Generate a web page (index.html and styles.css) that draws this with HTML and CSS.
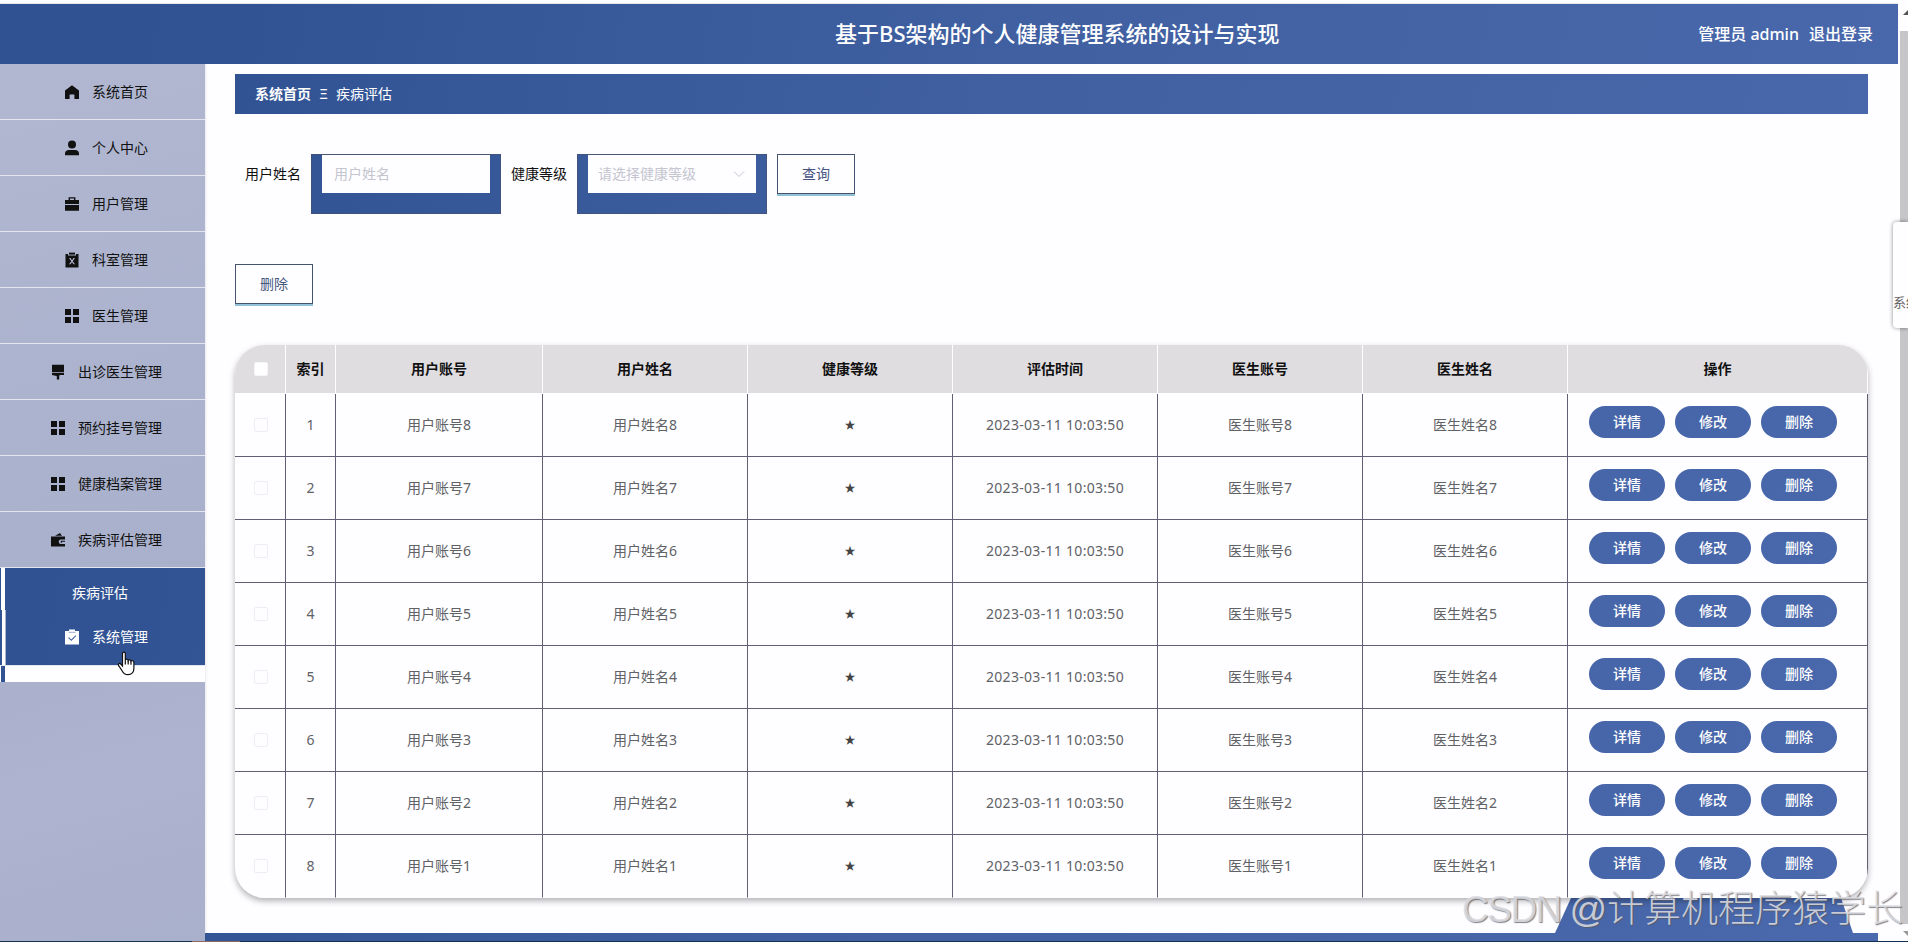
FILE: index.html
```html
<!DOCTYPE html>
<html lang="zh-CN">
	<head>
		<meta charset="UTF-8">
		<title>个人健康管理系统</title>
		<link rel="stylesheet" href="styles.css">
	</head>
	<body>
		<!-- 图标 -->
		<svg class="symbols">
			<symbol id="i-home" viewBox="0 0 16 16"><path d="M8 1.2 15 6.6V15h-4.6v-4.4H5.6V15H1V6.6z"/></symbol>
			<symbol id="i-user" viewBox="0 0 16 16"><circle cx="8" cy="4.6" r="4"/><path d="M1 15.2v-1.6C1 11.200 2.600 10 4.800 10h6.400c2.200 0 3.800 1.200 3.800 3.600v1.600z"/></symbol>
			<symbol id="i-case" viewBox="0 0 16 16"><path fill-rule="evenodd" d="M4.600 4V1.300h6.800V4H15v4H1V4zM6 4h4V2.600H6zM1 9h14v5.800H1z"/></symbol>
			<symbol id="i-note" viewBox="0 0 16 16"><path fill-rule="evenodd" d="M1.500 2H4v1.600h8V2h2.500v13.400h-13zM5 6l2.300 3.200L5 12.300h1.500L8 10.200l1.500 2.100H11L8.700 9.200 11 6H9.500L8 8.200 6.500 6z"/><path d="M5 .6h6v2H5z"/></symbol>
			<symbol id="i-grid" viewBox="0 0 16 16"><path d="M1 1h6v6H1zM9 1h6v6H9zM1 9h6v6H1zM9 9h6v6H9z"/></symbol>
			<symbol id="i-brush" viewBox="0 0 16 16"><path d="M2 .8h12v7.400H2zM2 9h12v2h-4.500v1H9.200v3.600H6.800V12H6.500l-4.500-1z"/></symbol>
			<symbol id="i-wallet" viewBox="0 0 16 16"><path fill-rule="evenodd" d="M1 4.500h14v3h-4a2.300 2.300 0 0 0 0 4.600h4v2.400H1z"/><path d="m5 3.800 5-2.800 2 2.800zM10.800 8.800H15v1H12v1h-1.200z"/></symbol>
			<symbol id="i-check" viewBox="0 0 16 16"><path d="M1 2h14v13.500H1zM5 .5h6v3H5z"/><path d="M4.500 8.600 7.300 11.200 11.800 6.600" fill="none" stroke="#4a69ad" stroke-width="1.100"/><path d="M4.500 3.300h7" stroke="#8194c4" stroke-width=".8"/></symbol>
		</svg>

		<div id="header">
			<h1>基于BS架构的个人健康管理系统的设计与实现</h1>
			<div class="user">
				<span>管理员 admin</span>
				<a>退出登录</a>
			</div>
		</div>

		<div id="box">
			<ul id="menu">
				<li><svg><use href="#i-home"/></svg>系统首页</li>
				<li><svg><use href="#i-user"/></svg>个人中心</li>
				<li><svg><use href="#i-case"/></svg>用户管理</li>
				<li><svg><use href="#i-note"/></svg>科室管理</li>
				<li><svg><use href="#i-grid"/></svg>医生管理</li>
				<li><svg><use href="#i-brush"/></svg>出诊医生管理</li>
				<li><svg><use href="#i-grid"/></svg>预约挂号管理</li>
				<li><svg><use href="#i-grid"/></svg>健康档案管理</li>
				<li><svg><use href="#i-wallet"/></svg>疾病评估管理</li>
				<li class="sub">疾病评估</li>
				<li class="hover"><svg><use href="#i-check"/></svg>系统管理</li>
				<li class="next"></li>
			</ul>

			<div id="main">
				<div class="crumb">
					<b>系统首页</b><i>Ξ</i><span>疾病评估</span>
				</div>
				<div class="search">
					<label>用户姓名</label>
					<div class="field"><div class="inner">用户姓名</div></div>
					<label>健康等级</label>
					<div class="field">
						<div class="inner select">请选择健康等级
							<svg viewBox="0 0 12 12"><path d="m1 3.500 5 5 5-5"/></svg>
						</div>
					</div>
					<button class="btn">查询</button>
				</div>
				<button class="btn del">删除</button>

				<div class="table">
					<table>
						<colgroup>
							<col class="c1"><col class="c2"><col class="c3">
							<col><col><col><col><col>
							<col class="c9">
						</colgroup>
						<thead>
							<tr>
								<th><span class="chk"></span></th>
								<th>索引</th>
								<th>用户账号</th>
								<th>用户姓名</th>
								<th>健康等级</th>
								<th>评估时间</th>
								<th>医生账号</th>
								<th>医生姓名</th>
								<th>操作</th>
							</tr>
						</thead>
						<tbody id="list"></tbody>
					</table>
				</div>
				<div class="foot"></div>
			</div>
		</div>

		<!-- 滚动条 -->
		<div id="scroll">
			<span class="up"></span>
			<span class="thumb"></span>
			<span class="down"></span>
		</div>
		<div id="float">系统</div>
		<div id="mark"><span>CSDN</span><span>@计算机程序猿学长</span></div>
		<div id="line"></div>
		<svg id="hand" viewBox="0 0 19 25"><path d="M5.500 2.400C5.500.7 8.300.7 8.300 2.400V9c.3-1.200 2.800-1 2.900.4.500-1 2.700-.7 2.800.7.700-.8 2.900-.5 2.900 1.400V17c0 4-2 6.700-6 6.700-3.600 0-4.800-1.800-6-4.200L1.500 14.400c-.7-1.600 1-2.600 2.200-1.400l1.800 2z"/><path d="M8.300 9v4.500M11.200 9.500v4M14 10.200v3.500"/></svg>
		<script type="text/javascript" src="main.js"></script>
	</body>
</html>
```
FILE: styles.css
```css
*{
	padding: 0;
	margin: 0;
	box-sizing: border-box;
}
li{
	list-style: none;
}
body{
	width: 1908px;
	height: 942px;
	overflow: hidden;
	position: relative;
	background: #fefdff;
	font: 14px/20px "Noto Sans", "Noto Sans CJK SC", sans-serif;
	color: #111;
}
.symbols{
	position: absolute;
	width: 0;
	height: 0;
}
#header, .crumb, .field, .sub, .hover, .foot, .ops a{
	background: linear-gradient(100deg, #305192 0%, #315394 12%, #4060a1 50%, #4665a7 75%, #4a69ae 100%) fixed;
}
#header{
	width: 1898px;
	height: 60px;
	margin-top: 4px;
	display: flex;
	align-items: center;
	justify-content: flex-end;
	position: relative;
	color: #fff;
	box-shadow: 0 -1px #e8e6ea;
}
#header h1{
	position: absolute;
	left: 835px;
	top: 14px;
	font-size: 22px;
	line-height: 30px;
	font-weight: 500;
	white-space: nowrap;
}
.user{
	display: flex;
	gap: 10px;
	padding-right: 25px;
	font-size: 16px;
	font-weight: 500;
}
#box{
	display: flex;
	width: 1898px;
	height: 877px;
}
#menu{
	width: 205px;
	background: linear-gradient(165deg, #b1b7d1, #abb2cd 45%, #a9b0cb 60%, #aeb3cf 80%, #a9b0cb);
	box-shadow: 0 0 3px rgba(0,0,0,.15);
}
#menu li{
	height: 56px;
	padding-left: 7px;
	display: flex;
	align-items: center;
	justify-content: center;
	border-bottom: 1px solid #e4e5ee;
}
#menu svg{
	width: 16px;
	height: 16px;
	margin-right: 12px;
	fill: #111;
}
#menu .sub{
	height: 42px;
	padding: 8px 5px 0 0;
	border: 0;
	color: #fff;
	box-shadow: inset 1px 0 #315293, inset 5px 0 #fff;
}
#menu .hover{
	padding-bottom: 1px;
	color: #fff;
	box-shadow: inset 2px 0 #315293, inset 5px 0 #fff, inset 6px 0 #a9b4d2;
}
#menu .hover svg{
	fill: #fff;
}
#menu .next{
	height: 16px;
	border: 0;
	background: #fefdff;
	box-shadow: inset 1px 0 #fff, inset 5px 0 #315293;
}
#main{
	flex: 1;
	padding: 10px 30px 0;
	position: relative;
}
.crumb{
	height: 40px;
	padding-left: 20px;
	display: flex;
	align-items: center;
	color: #fff;
}
.crumb i{
	width: 25px;
	text-align: center;
	font-style: normal;
}
.search{
	display: flex;
	margin-top: 40px;
	padding-left: 10px;
	height: 60px;
}
.search label{
	width: 66px;
	line-height: 40px;
}
.field{
	width: 190px;
	height: 60px;
	padding: 0 11px;
	margin-right: 10px;
	box-shadow: inset 0 0 0 1px rgba(70,80,110,.6);
}
.inner{
	height: 39px;
	padding-left: 12px;
	line-height: 38px;
	background: #fefdff;
	border-top: 1px solid #4a5574;
	color: #c4c5cf;
}
.select{
	padding: 0 11px 0 10px;
	display: flex;
	align-items: center;
	justify-content: space-between;
}
.select svg{
	width: 12px;
	height: 12px;
	fill: none;
	stroke: #c4c5cf;
}
.btn{
	display: block;
	width: 78px;
	height: 40px;
	border: 1px solid #46536f;
	background: #fefdff;
	box-shadow: 0 2px #91c1d9;
	color: #46557f;
	font: inherit;
}
.del{
	margin-top: 50px;
}
.table{
	position: relative;
	z-index: 1;
	height: 553px;
	margin-top: 41px;
	border-radius: 30px;
	overflow: hidden;
	background: #fefdff;
	box-shadow: 0 3px 6px rgba(0,0,0,.3);
}
table{
	width: 1633px;
	table-layout: fixed;
	border-spacing: 0;
	text-align: center;
}
col{
	width: 205px;
}
.c1{
	width: 51px;
}
.c2{
	width: 50px;
}
.c3{
	width: 207px;
}
.c9{
	width: 300px;
}
th{
	height: 49px;
	background: #dfdde0;
	border-right: 1px solid #fefdff;
	border-bottom: 1px solid #fefdff;
}
td{
	height: 63px;
	border-right: 1px solid #605f75;
	border-bottom: 1px solid #605f75;
	color: #606266;
}
tr:last-child td{
	border-bottom-color: #fefdff;
}
.star{
	font-size: 11px;
	color: #444;
}
.time{
	letter-spacing: .3px;
}
.chk{
	display: block;
	width: 14px;
	height: 14px;
	margin: 0 auto;
	border: 1px solid #eeedf1;
	border-radius: 2px;
	background: #fefdff;
}
th .chk{
	border-color: #f5f4f7;
}
th:first-child, td:first-child{
	padding-left: 2px;
}
.ops{
	display: flex;
	gap: 10px;
	padding: 0 0 6px 21px;
}
.ops a{
	width: 76px;
	height: 32px;
	line-height: 32px;
	border-radius: 16px;
	color: #fff;
	font-weight: 500;
}
.foot{
	position: absolute;
	left: 0;
	bottom: 0;
	width: 1673px;
	height: 43px;
	clip-path: polygon(0 35px, 1350px 35px, 1366px 0, 1636px 0, 1648px 35px, 1673px 35px, 1673px 43px, 0 43px);
}
#scroll{
	position: absolute;
	top: 4px;
	right: 0;
	width: 8px;
	height: 937px;
	overflow: hidden;
}
#scroll span{
	position: absolute;
}
#scroll .thumb{
	top: 27px;
	left: 0;
	width: 8px;
	height: 893px;
	background: #c6c5c8;
}
#scroll .up, #scroll .down{
	left: 3px;
	border: 5px solid transparent;
}
#scroll .up{
	top: 2px;
	border-bottom-color: #555;
	border-top-width: 4px;
}
#scroll .down{
	bottom: 0;
	border-top-color: #999;
}
#float{
	position: absolute;
	left: 1893px;
	top: 222px;
	width: 15px;
	height: 106px;
	padding-top: 70px;
	overflow: hidden;
	background: #fefdff;
	border-radius: 4px 0 0 4px;
	box-shadow: 0 0 4px rgba(0,0,0,.45);
	color: #666;
	font-size: 13px;
	white-space: nowrap;
}
#mark{
	position: absolute;
	z-index: 2;
	left: 1462px;
	top: 885px;
	width: 441px;
	display: flex;
	justify-content: space-between;
	font: 37px/50px "Liberation Sans", "Noto Sans CJK SC", sans-serif;
	font-weight: 300;
	color: rgba(222,223,228,.85);
	text-shadow: 1px 1px 1px rgba(90,90,95,.75);
	white-space: nowrap;
}
#mark span:first-child{
	letter-spacing: -1.5px;
}
#line{
	position: absolute;
	left: 0;
	bottom: 0;
	width: 1908px;
	height: 1px;
	background: linear-gradient(90deg, #14304f 192px, #8a6a60 192px, #8a6a60 240px, #14304f 240px);
}
#hand{
	position: absolute;
	left: 117px;
	top: 651px;
	width: 19px;
	height: 25px;
	fill: #fff;
	stroke: #111;
	stroke-width: 1.200;
}
```
FILE: main.js
```js
//表格数据
var list = document.getElementById("list");
var html = "";
for(var i = 1; i <= 8; i ++){
	//编号倒序
	var n = 9 - i;
	html += '<tr>'
		+ '<td><span class="chk"></span></td>'
		+ '<td>' + i + '</td>'
		+ '<td>用户账号' + n + '</td>'
		+ '<td>用户姓名' + n + '</td>'
		+ '<td class="star">★</td>'
		+ '<td class="time">2023-03-11 10:03:50</td>'
		+ '<td>医生账号' + n + '</td>'
		+ '<td>医生姓名' + n + '</td>'
		+ '<td><div class="ops"><a>详情</a><a>修改</a><a>删除</a></div></td>'
		+ '</tr>';
}
list.innerHTML = html;
```
